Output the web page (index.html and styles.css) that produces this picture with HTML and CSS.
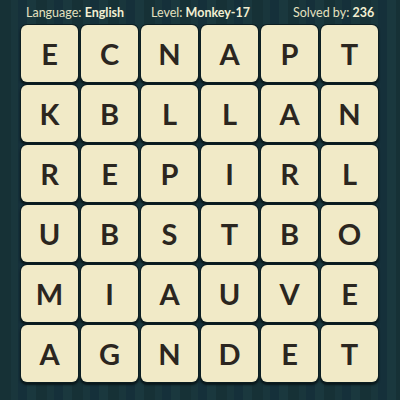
FILE: index.html
```html
<!DOCTYPE html>
<html>
<head>
<meta charset="utf-8">
<link rel="stylesheet" href="styles.css">
</head>
<body>
<div class="page">
  <div class="header">
    <span class="item">Language: <b>English</b></span>
    <span class="item">Level: <b>Monkey-17</b></span>
    <span class="item">Solved by: <b>236</b></span>
  </div>
  <div class="grid">
    <div class="tile">E</div><div class="tile">C</div><div class="tile">N</div><div class="tile">A</div><div class="tile">P</div><div class="tile">T</div>
    <div class="tile">K</div><div class="tile">B</div><div class="tile">L</div><div class="tile">L</div><div class="tile">A</div><div class="tile">N</div>
    <div class="tile">R</div><div class="tile">E</div><div class="tile">P</div><div class="tile">I</div><div class="tile">R</div><div class="tile">L</div>
    <div class="tile">U</div><div class="tile">B</div><div class="tile">S</div><div class="tile">T</div><div class="tile">B</div><div class="tile">O</div>
    <div class="tile">M</div><div class="tile">I</div><div class="tile">A</div><div class="tile">U</div><div class="tile">V</div><div class="tile">E</div>
    <div class="tile">A</div><div class="tile">G</div><div class="tile">N</div><div class="tile">D</div><div class="tile">E</div><div class="tile">T</div>
  </div>
</div>
</body>
</html>
```
FILE: styles.css
```css
html, body {
  margin: 0;
  padding: 0;
}
body {
  width: 400px;
  height: 400px;
  overflow: hidden;
  background-color: #173338;
  background-image: repeating-linear-gradient(90deg,
    #163136 0px, #163136 11px,
    #19363c 11px, #19363c 18px,
    #15303a 18px, #15303a 27px,
    #1a383e 27px, #1a383e 36px);
  font-family: Lato, "Open Sans", sans-serif;
}
.page {
  width: 400px;
  height: 400px;
}
.header {
  height: 25px;
  display: grid;
  grid-template-columns: 125px 142px 1fr;
  padding-left: 26px;
  align-items: center;
  color: #e4e1c0;
  font-size: 12.5px;
  line-height: 22px;
}
.header b {
  font-weight: 700;
  color: #f2efd2;
}
.grid {
  display: grid;
  grid-template-columns: repeat(6, 57px);
  grid-auto-rows: 57px;
  gap: 3px;
  padding-left: 21px;
}
.tile {
  background: #f1eac7;
  border-radius: 6px;
  box-shadow: 0 0 0 1px #0c1e22, 0 2px 2px 1px #0a181b;
  display: flex;
  align-items: center;
  justify-content: center;
  color: #2b2620;
  font-size: 29px;
  font-weight: 700;
}
```
